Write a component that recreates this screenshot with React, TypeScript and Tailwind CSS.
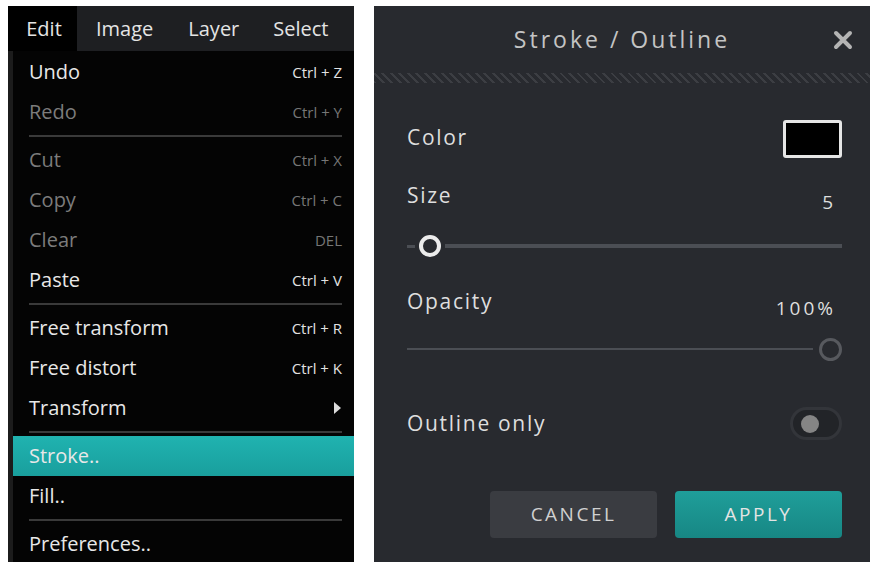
type Item = { label: string; shortcut?: string; disabled?: boolean; active?: boolean; sub?: boolean }

const groups: Item[][] = [
  [
    { label: "Undo", shortcut: "Ctrl + Z" },
    { label: "Redo", shortcut: "Ctrl + Y", disabled: true },
  ],
  [
    { label: "Cut", shortcut: "Ctrl + X", disabled: true },
    { label: "Copy", shortcut: "Ctrl + C", disabled: true },
    { label: "Clear", shortcut: "DEL", disabled: true },
    { label: "Paste", shortcut: "Ctrl + V" },
  ],
  [
    { label: "Free transform", shortcut: "Ctrl + R" },
    { label: "Free distort", shortcut: "Ctrl + K" },
    { label: "Transform", sub: true },
  ],
  [
    { label: "Stroke..", active: true },
    { label: "Fill.." },
  ],
  [{ label: "Preferences.." }],
]

function MenuRow({ item }: { item: Item }) {
  return (
    <div
      className={`h-[40px] flex items-center justify-between pl-[16px] pr-[12px] ${
        item.active ? "bg-gradient-to-b from-[#20b3b0] to-[#199f9d]" : ""
      }`}
    >
      <span className={`text-[20px] ${item.disabled ? "text-[#7c7c7c]" : "text-[#e8e8e8]"}`}>{item.label}</span>
      {item.shortcut && (
        <span className={`text-[15px] ${item.disabled ? "text-[#767676]" : "text-[#e2e2e2]"}`}>{item.shortcut}</span>
      )}
      {item.sub && <span className="w-0 h-0 border-y-[6px] border-y-transparent border-l-[7px] border-l-[#dcdcdc] mr-[1px]" />}
    </div>
  )
}

function EditMenu() {
  return (
    <div className="w-[346px] h-[556px] flex flex-col overflow-hidden bg-black">
      {/* Menu bar */}
      <div className="h-[45px] shrink-0 flex items-stretch bg-[#1e1f22] text-[20px] text-[#e4e4e4]">
        <div className="w-[69px] bg-black flex items-center justify-center pl-[3px]">Edit</div>
        <div className="flex items-center pl-[19px] pr-[17px]">Image</div>
        <div className="flex items-center pl-[18px] pr-[17px]">Layer</div>
        <div className="flex items-center pl-[17px]">Select</div>
      </div>

      <div className="flex flex-1 min-h-0">
        <div className="w-[5px] bg-[#1c1c1c]" />
        <div className="flex-1 flex flex-col bg-[#040404] pt-[1px]">
          {groups.map((g, gi) => (
            <div key={gi}>
              {gi > 0 && (
                <div className="h-[8px] flex items-center px-[16px] pr-[12px]">
                  <div className="h-[2px] w-full bg-[#3a3a3a]" />
                </div>
              )}
              {g.map((it) => (
                <MenuRow key={it.label} item={it} />
              ))}
            </div>
          ))}
        </div>
      </div>
    </div>
  )
}

function StrokeDialog() {
  return (
    <div className="w-[496px] h-[556px] bg-[#282a2f] flex flex-col text-[#dedede]">
      <div className="h-[67px] grid grid-cols-[1fr_auto_1fr] items-center">
        <div />
        <div className="text-[23px] tracking-[3px] text-[#c4c4c4]">Stroke / Outline</div>
        <div className="justify-self-end pr-[17px] flex items-center">
          <svg width="20" height="20" viewBox="0 0 20 20">
            <path d="M3 3 L17 17 M17 3 L3 17" stroke="#b4b4b4" strokeWidth="4" strokeLinecap="round" />
          </svg>
        </div>
      </div>
      <div className="h-[10px] bg-[repeating-linear-gradient(45deg,#3c3e43_0px,#3c3e43_2px,transparent_2px,transparent_6px)]" />

      <div className="flex flex-col pl-[33px] pr-[28px]">
        {/* Color */}
        <div className="mt-[37px] h-[38px] flex items-center justify-between">
          <span className="text-[21px] tracking-[1.7px] -mt-[3px]">Color</span>
          <div className="w-[59px] h-[38px] rounded-[3px] border-[3px] border-[#e6e6e6] bg-black" />
        </div>

        {/* Size */}
        <div className="mt-[24px] h-[28px] flex items-center justify-between">
          <span className="text-[21px] tracking-[1.7px]">Size</span>
          <span className="text-[19px] tracking-[3px] mt-[12px] pr-[6px]">5</span>
        </div>
        <div className="mt-[24px] h-[24px] flex items-center">
          <div className="w-[8px] h-[3px] bg-[#4b4e54]" />
          <div className="w-[22px] h-[22px] mx-[4px] rounded-full border-[4px] border-[#ececec] bg-[#282a2f] shrink-0" />
          <div className="flex-1 h-[4px] bg-[#4b4e54]" />
        </div>

        {/* Opacity */}
        <div className="mt-[30px] h-[28px] flex items-center justify-between">
          <span className="text-[21px] tracking-[1.7px]">Opacity</span>
          <span className="text-[19px] tracking-[3px] mt-[12px] pr-[6px]">100%</span>
        </div>
        <div className="mt-[21px] h-[24px] flex items-center">
          <div className="flex-1 h-[2px] bg-[#4b4e54]" />
          <div className="w-[23px] h-[23px] ml-[6px] rounded-full border-[3px] border-[#57595e] bg-[#282a2f] shrink-0" />
        </div>

        {/* Outline only */}
        <div className="mt-[46px] h-[33px] flex items-center justify-between">
          <span className="text-[21px] tracking-[1.7px]">Outline only</span>
          <div className="w-[52px] h-[33px] rounded-full bg-[#222428] border-[3px] border-[#33353a] flex items-center pl-[8px]">
            <div className="w-[18px] h-[18px] rounded-full bg-[#858585]" />
          </div>
        </div>

        {/* Buttons */}
        <div className="mt-[51px] flex justify-end gap-[18px]">
          <button className="w-[167px] h-[47px] rounded-[4px] bg-[#3a3c41] text-[19px] tracking-[2.5px] text-[#d0d0d0]">
            CANCEL
          </button>
          <button className="w-[167px] h-[47px] rounded-[4px] bg-gradient-to-b from-[#1f9e9a] to-[#178784] text-[19px] tracking-[2.5px] text-[#e4e4e4]">
            APPLY
          </button>
        </div>
      </div>
    </div>
  )
}

export default function App() {
  return (
    <div
      className="w-[884px] h-[570px] bg-white flex items-start gap-[20px] pt-[6px] pl-[8px] overflow-hidden"
      style={{ fontFamily: '"Open Sans", "Noto Sans", sans-serif' }}
    >
      <EditMenu />
      <StrokeDialog />
    </div>
  )
}
